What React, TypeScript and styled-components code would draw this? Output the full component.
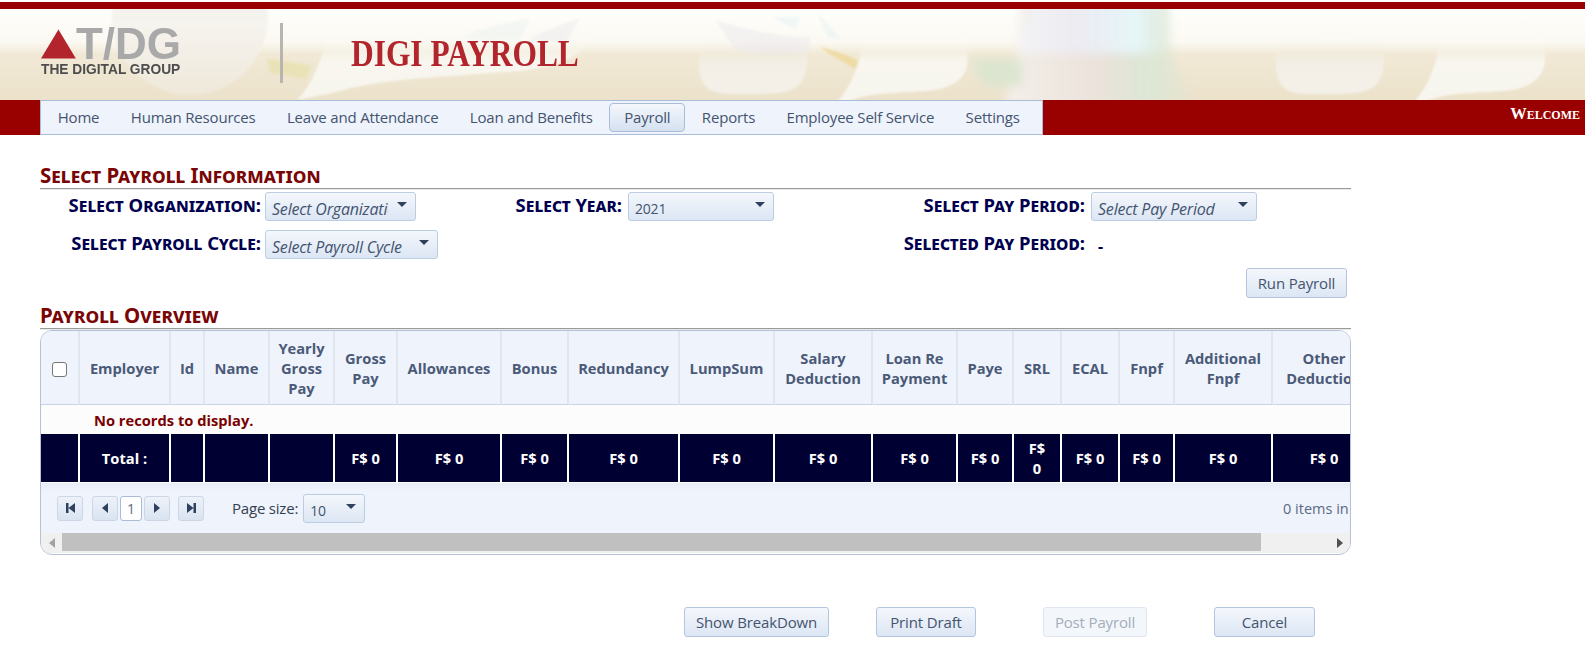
import React from 'react';
import styled, { createGlobalStyle } from 'styled-components';

const GlobalStyle = createGlobalStyle`
  html, body {
    margin: 0;
    padding: 0;
    background: #ffffff;
    overflow: hidden;
  }
  body {
    font-family: "Open Sans", "Noto Sans", sans-serif;
  }
`;

const Page = styled.div`
  width: 1585px;
  height: 657px;
  overflow: hidden;
  background: #fff;
`;

const TopStripe = styled.div`
  height: 7px;
  margin-top: 2px;
  background: #990000;
`;

const Banner = styled.header`
  position: relative;
  height: 91px;
  box-sizing: border-box;
  display: flex;
  align-items: center;
  padding: 0 0 4px 41px;
  overflow: hidden;
  background: linear-gradient(180deg, #fefefc 0%, #fbf9f2 36%, #f1e9d6 50%, #ece2cb 100%);
`;

const BannerArt = styled.svg`
  position: absolute;
  inset: 0;
  width: 100%;
  height: 100%;
`;

const Logo = styled.div`
  position: relative;
  width: 140px;
  display: flex;
  flex-direction: column;
`;

const LogoMark = styled.div`
  display: flex;
  align-items: center;
  height: 30px;
`;

const LogoLetters = styled.span`
  font-family: "Liberation Sans", Arial, sans-serif;
  font-weight: 700;
  font-size: 44px;
  line-height: 30px;
  color: #a9a9a9;
`;

const LogoName = styled.span`
  margin-top: 4px;
  font-family: "Liberation Sans", Arial, sans-serif;
  font-weight: 700;
  font-size: 13.75px;
  line-height: 14px;
  color: #4d4d4d;
  white-space: nowrap;
`;

const BannerDivider = styled.div`
  position: relative;
  width: 3px;
  height: 60px;
  margin-left: 99px;
  background: #b7b5ae;
`;

const ProductName = styled.div`
  position: relative;
  margin: 1px 0 0 68px;
  font-family: "Liberation Serif", serif;
  font-weight: 700;
  font-size: 38.5px;
  line-height: 38px;
  color: #b3252c;
  white-space: nowrap;
  transform: scaleX(0.816);
  transform-origin: left center;
`;

const NavBar = styled.nav`
  height: 35px;
  display: flex;
  justify-content: space-between;
  background: #990000;
  box-sizing: border-box;
`;

const NavMenu = styled.ul`
  list-style: none;
  margin: 0 0 0 40px;
  padding: 0 2px;
  width: 1003px;
  box-sizing: border-box;
  display: flex;
  align-items: center;
  background: #eff3fc;
  border: 1px solid #a9bdd8;
`;

const NavItem = styled.li<{ $active?: boolean }>`
  height: 27px;
  line-height: 26px;
  padding: 0 13.7px;
  margin-right: 2px;
  font-size: 15px;
  letter-spacing: -0.18px;
  color: #44546f;
  white-space: nowrap;
  border-radius: 4px;
  border: 1px solid ${p => (p.$active ? '#a9bdd8' : 'transparent')};
  background: ${p => (p.$active ? 'linear-gradient(180deg, #f4f7fc 0%, #d5e1f1 100%)' : 'none')};
`;

const Welcome = styled.div`
  font-family: "Liberation Serif", serif;
  font-variant: small-caps;
  font-weight: 700;
  font-size: 16.5px;
  line-height: 27px;
  color: #ffffff;
  padding-right: 5px;
`;

const Content = styled.main`
  width: 1311px;
  margin-left: 40px;
`;

const SectionTitle = styled.h2<{ $top: number }>`
  margin: ${p => p.$top}px 0 0;
  font-family: "Noto Sans", sans-serif;
  font-size: 20.5px;
  line-height: 26px;
  font-weight: 700;
  font-variant: small-caps;
  color: #7a0505;
  border-bottom: 1px solid #9a9a9a;
  box-shadow: 0 1px 0 #e9e9e9;
`;

const FormGrid = styled.div`
  display: grid;
  grid-template-columns: 225px 240px 123px 261px 202px 1fr;
  grid-auto-rows: 38px;
  margin-top: 3px;
  align-items: start;
`;

const FieldLabel = styled.label<{ $pad?: number }>`
  display: block;
  height: 29px;
  line-height: 26px;
  text-align: right;
  padding-right: ${p => p.$pad ?? 4}px;
  font-family: "Noto Sans", sans-serif;
  font-size: 18.5px;
  font-weight: 700;
  font-variant: small-caps;
  color: #00004f;
  white-space: nowrap;
`;

const Dropdown = styled.div<{ $width: number; $placeholder?: boolean }>`
  position: relative;
  width: ${p => p.$width}px;
  height: 29px;
  box-sizing: border-box;
  padding: 4px 27px 0 6px;
  font-size: ${p => (p.$placeholder ? 16 : 14)}px;
  line-height: 24px;
  letter-spacing: -0.2px;
  font-style: ${p => (p.$placeholder ? 'italic' : 'normal')};
  color: #44546f;
  background: linear-gradient(180deg, #f4f7fc 0%, #dce6f4 100%);
  border: 1px solid #bccde2;
  border-radius: 3px;

  &::after {
    content: '';
    position: absolute;
    right: 8px;
    top: 9px;
    border-left: 5.5px solid transparent;
    border-right: 5.5px solid transparent;
    border-top: 5.5px solid #2f415c;
  }
`;

const DropdownText = styled.span`
  display: block;
  overflow: hidden;
  white-space: nowrap;
`;

const SelectedValue = styled.span`
  font-size: 16px;
  font-weight: 700;
  line-height: 33px;
  padding-left: 7px;
  color: #00004f;
`;

const Button = styled.button<{ $width: number; $gap?: number }>`
  width: ${p => p.$width}px;
  height: 30px;
  margin-left: ${p => p.$gap ?? 0}px;
  padding: 0;
  font-family: inherit;
  font-size: 15px;
  letter-spacing: -0.15px;
  color: #44546f;
  background: linear-gradient(180deg, #f4f7fc 0%, #dce6f4 100%);
  border: 1px solid #b3c6de;
  border-radius: 3px;

  &:disabled {
    color: #a5adba;
    background: #f3f6fb;
    border-color: #dfe6f0;
  }
`;

const RunRow = styled.div`
  display: flex;
  justify-content: flex-end;
  padding-right: 4px;
`;

const GridPanel = styled.section`
  margin-top: 1px;
  height: 225px;
  border: 1px solid #b5c2d6;
  border-radius: 12px;
  overflow: hidden;
  background: #fff;
  box-sizing: border-box;
`;

const Table = styled.table`
  table-layout: fixed;
  border-collapse: separate;
  border-spacing: 0;
  width: 1336px;
`;

const HeadCell = styled.th`
  height: 74px;
  padding: 0 4px;
  box-sizing: border-box;
  background: #eff3fb;
  border-right: 2px solid #e0e6f0;
  border-bottom: 1px solid #c9d5e6;
  font-size: 14.7px;
  line-height: 20px;
  font-weight: 700;
  color: #4a5a78;
  text-align: center;
`;

const Check = styled.span`
  display: inline-block;
  width: 15px;
  height: 15px;
  vertical-align: middle;
  box-sizing: border-box;
  background: #fff;
  border: 1px solid #767676;
  border-radius: 3px;
`;

const EmptyCell = styled.td`
  height: 29px;
  padding: 0 0 0 53px;
  background: #fcfcfc;
  font-size: 14.7px;
  font-weight: 700;
  color: #7a0000;
`;

const TotalCell = styled.td<{ $narrow?: boolean }>`
  height: 49px;
  padding: 0 ${p => (p.$narrow ? 10 : 4)}px;
  box-sizing: border-box;
  background: #000033;
  border-right: 2px solid #ffffff;
  border-bottom: 1px solid #ffffff;
  color: #ffffff;
  font-size: 14.7px;
  line-height: 20px;
  font-weight: 700;
  text-align: center;
`;

const Pager = styled.div`
  height: 50px;
  display: flex;
  align-items: center;
  justify-content: space-between;
  padding-left: 16px;
  background: linear-gradient(180deg, #e6ecf5 0px, #eff3fb 7px);
  overflow: hidden;
`;

const PagerControls = styled.div`
  display: flex;
  align-items: center;
`;

const PagerButton = styled.span<{ $gap?: number }>`
  display: flex;
  align-items: center;
  justify-content: center;
  width: 26px;
  height: 25px;
  margin-left: ${p => p.$gap ?? 0}px;
  box-sizing: border-box;
  background: linear-gradient(180deg, #eef2f9 0%, #d9e3f1 100%);
  border: 1px solid #ccd6e4;
  border-radius: 3px;
`;

const PageNumber = styled.span`
  display: block;
  width: 22px;
  height: 25px;
  margin: 0 2px;
  box-sizing: border-box;
  text-align: center;
  line-height: 23px;
  font-size: 14px;
  color: #5a6a84;
  background: #fff;
  border: 1px solid #a9bdd8;
  border-radius: 3px;
`;

const PageSize = styled.span`
  margin: 0 5px 0 28px;
  font-size: 15px;
  letter-spacing: -0.2px;
  color: #333f52;
`;

const ItemsInfo = styled.span`
  width: 67px;
  overflow: hidden;
  white-space: nowrap;
  font-size: 14.5px;
  color: #5a6a84;
  flex: none;
`;

const ScrollBar = styled.div`
  height: 20px;
  display: flex;
  align-items: stretch;
  background: #f0f0f0;
`;

const ScrollArrow = styled.span`
  width: 21px;
  flex: none;
  display: flex;
  align-items: center;
  justify-content: center;
`;

const ScrollThumb = styled.span`
  width: 1199px;
  height: 18px;
  background: #c0c0c0;
`;

const ScrollTrack = styled.span`
  flex: 1;
`;

const Actions = styled.div`
  display: flex;
  padding-left: 644px;
  margin-top: 52px;
`;

const Triangle: React.FC<{ dir: 'left' | 'right'; color?: string }> = ({ dir, color = '#2f415c' }) => (
  <svg width="6" height="10" viewBox="0 0 6 10">
    <path d={dir === 'left' ? 'M6 0v10L0 5z' : 'M0 0v10l6-5z'} fill={color} />
  </svg>
);

const EndIcon: React.FC<{ dir: 'first' | 'last' }> = ({ dir }) => (
  <svg width="9" height="10" viewBox="0 0 9 10">
    <path d={dir === 'first' ? 'M0 0h2.5v10H0zM9 0v10L2.5 5z' : 'M6.5 0H9v10H6.5zM0 0v10l6.5-5z'} fill="#2f415c" />
  </svg>
);

const columns = [
  { label: 'Employer', width: 91 },
  { label: 'Id', width: 34 },
  { label: 'Name', width: 65 },
  { label: 'Yearly Gross Pay', width: 65 },
  { label: 'Gross Pay', width: 63, total: 'F$ 0' },
  { label: 'Allowances', width: 104, total: 'F$ 0' },
  { label: 'Bonus', width: 67, total: 'F$ 0' },
  { label: 'Redundancy', width: 111, total: 'F$ 0' },
  { label: 'LumpSum', width: 95, total: 'F$ 0' },
  { label: 'Salary Deduction', width: 98, total: 'F$ 0' },
  { label: 'Loan Re Payment', width: 85, total: 'F$ 0' },
  { label: 'Paye', width: 56, total: 'F$ 0' },
  { label: 'SRL', width: 48, total: 'F$ 0', narrow: true },
  { label: 'ECAL', width: 58, total: 'F$ 0' },
  { label: 'Fnpf', width: 55, total: 'F$ 0' },
  { label: 'Additional Fnpf', width: 98, total: 'F$ 0' },
  { label: 'Other Deduction', width: 104, total: 'F$ 0' },
];

const BOWL = 'M0 28C0 62 20 59 54 59S108 58 108 24C108 14 106 6 106 0L2 2C1 10 0 18 0 28Z';
const BLOB = 'M0 66C14 50 22 28 24 8C26 2 30 0 40 0H120C128 0 130 10 130 24C130 40 118 54 88 56C60 58 30 58 12 66Z';

const BannerBackdrop = () => (
  <BannerArt viewBox="0 0 1585 91" aria-hidden="true">
    <defs>
      <linearGradient id="fade" x1="0" x2="0" y1="0" y2="1">
        <stop offset="0" stopColor="#fafaf6" stopOpacity="0" />
        <stop offset="0.22" stopColor="#fafaf6" stopOpacity="0.2" />
        <stop offset="0.42" stopColor="#f8f7f0" stopOpacity="0.95" />
        <stop offset="1" stopColor="#f7f5ee" />
      </linearGradient>
      <linearGradient id="bowl" x1="0" x2="0" y1="0" y2="1">
        <stop offset="0" stopColor="#f4f1ea" stopOpacity="0" />
        <stop offset="0.3" stopColor="#f4f1ea" stopOpacity="0.2" />
        <stop offset="0.5" stopColor="#f3f0e8" stopOpacity="0.9" />
        <stop offset="1" stopColor="#f3f0e8" />
      </linearGradient>
      <linearGradient id="lilac" x1="0" x2="1" y1="0" y2="0">
        <stop offset="0" stopColor="#f4f3f4" />
        <stop offset="0.4" stopColor="#ecebf2" />
        <stop offset="0.78" stopColor="#e6f6f8" />
        <stop offset="1" stopColor="#e6f6f8" stopOpacity="0" />
      </linearGradient>
      <linearGradient id="rose" x1="0" x2="1" y1="0" y2="0">
        <stop offset="0" stopColor="#f4f0e9" />
        <stop offset="0.45" stopColor="#ebe2dc" />
        <stop offset="0.72" stopColor="#dce6d4" />
        <stop offset="1" stopColor="#dce6d4" stopOpacity="0" />
      </linearGradient>
      <linearGradient id="moon" x1="0" x2="0" y1="0" y2="1">
        <stop offset="0" stopColor="#ecebf3" />
        <stop offset="0.55" stopColor="#f6f4ee" />
        <stop offset="1" stopColor="#efe7da" />
      </linearGradient>
      <filter id="soft">
        <feGaussianBlur stdDeviation="0.8" />
      </filter>
      <filter id="mist">
        <feGaussianBlur stdDeviation="5" />
      </filter>
    </defs>

    <g filter="url(#soft)">
      <circle cx="190" cy="8" r="78" fill="url(#moon)" />
      <path d="M297 91C312 76 322 50 325 33C380 25 500 22 590 24C592 40 570 56 520 62C440 68 380 70 340 82C325 86 310 88 297 91Z" fill="url(#fade)" />
      <path d={BOWL} transform="translate(699 26)" fill="url(#bowl)" />
      <path d={BOWL} transform="translate(1276 26)" fill="url(#bowl)" />
      <path d={BLOB} transform="translate(838 26)" fill="url(#fade)" />
      <path d={BLOB} transform="translate(1415 26)" fill="url(#fade)" />
    </g>

    <g filter="url(#mist)">
      <path d="M1000 120C1010 70 1015 50 1020 34V-20H1170V38C1175 60 1190 90 1207 120Z" fill="url(#rose)" />
      <path d="M1015 44C1025 14 1030 0 1030 -20H1170V44Z" fill="url(#lilac)" />
      <path d="M970 50H1022V77H985Z" fill="#dbe5cf" />
    </g>

    <g filter="url(#soft)" opacity="0.5">
      <path d="M716 12C740 18 780 30 810 28V44C780 46 750 48 735 40Z" fill="#ebe8ee" />
      <path d="M773 8L800 8L795 20ZM817 4L841 30L828 28Z" fill="#e2f2f2" />
      <path d="M463 28C480 20 510 12 530 10L520 30C500 30 480 32 463 28Z" fill="#ecf2f0" />
      <path d="M530 30C550 20 570 12 580 10L565 34Z" fill="#eceaee" />
    </g>
    <path d="M267 50L311 56L306 70L270 64Z" fill="#e8e2b0" opacity="0.8" filter="url(#soft)" />
    <path d="M820 38C835 42 848 46 858 52L855 60C842 52 830 46 820 38Z" fill="#eedca4" filter="url(#soft)" />
  </BannerArt>
);

const App: React.FC = () => {
  return (
    <Page>
      <GlobalStyle />
      <TopStripe />
      <Banner>
        <BannerBackdrop />
        <Logo>
          <LogoMark>
            <svg width="36" height="30" viewBox="0 0 36 30" aria-hidden="true">
              <path d="M18 0l18 30H0z" fill="#b3252c" />
            </svg>
            <LogoLetters>T/DG</LogoLetters>
          </LogoMark>
          <LogoName>THE DIGITAL GROUP</LogoName>
        </Logo>
        <BannerDivider />
        <ProductName>DIGI PAYROLL</ProductName>
      </Banner>

      <NavBar>
        <NavMenu>
          <NavItem>Home</NavItem>
          <NavItem>Human Resources</NavItem>
          <NavItem>Leave and Attendance</NavItem>
          <NavItem>Loan and Benefits</NavItem>
          <NavItem $active>Payroll</NavItem>
          <NavItem>Reports</NavItem>
          <NavItem>Employee Self Service</NavItem>
          <NavItem>Settings</NavItem>
        </NavMenu>
        <Welcome>Welcome</Welcome>
      </NavBar>

      <Content>
        <SectionTitle $top={27}>Select Payroll Information</SectionTitle>
        <FormGrid>
          <FieldLabel>Select Organization:</FieldLabel>
          <Dropdown $width={151} $placeholder><DropdownText>Select Organization</DropdownText></Dropdown>
          <FieldLabel $pad={6}>Select Year:</FieldLabel>
          <Dropdown $width={146}><DropdownText>2021</DropdownText></Dropdown>
          <FieldLabel $pad={6}>Select Pay Period:</FieldLabel>
          <Dropdown $width={166} $placeholder><DropdownText>Select Pay Period</DropdownText></Dropdown>

          <FieldLabel>Select Payroll Cycle:</FieldLabel>
          <Dropdown $width={173} $placeholder><DropdownText>Select Payroll Cycle</DropdownText></Dropdown>
          <span />
          <span />
          <FieldLabel $pad={6}>Selected Pay Period:</FieldLabel>
          <SelectedValue>-</SelectedValue>
        </FormGrid>
        <RunRow>
          <Button $width={101}>Run Payroll</Button>
        </RunRow>

        <SectionTitle $top={4}>Payroll Overview</SectionTitle>
        <GridPanel>
          <Table>
            <colgroup>
              <col style={{ width: 39 }} />
              {columns.map(c => (
                <col key={c.label} style={{ width: c.width }} />
              ))}
            </colgroup>
            <thead>
              <tr>
                <HeadCell><Check /></HeadCell>
                {columns.map(c => (
                  <HeadCell key={c.label}>{c.label}</HeadCell>
                ))}
              </tr>
            </thead>
            <tbody>
              <tr>
                <EmptyCell colSpan={18}>No records to display.</EmptyCell>
              </tr>
              <tr>
                <TotalCell />
                <TotalCell>Total :</TotalCell>
                <TotalCell />
                <TotalCell />
                <TotalCell />
                {columns.slice(4).map(c => (
                  <TotalCell key={c.label} $narrow={c.narrow}>{c.total}</TotalCell>
                ))}
              </tr>
            </tbody>
          </Table>
          <Pager>
            <PagerControls>
              <PagerButton><EndIcon dir="first" /></PagerButton>
              <PagerButton $gap={9}><Triangle dir="left" /></PagerButton>
              <PageNumber>1</PageNumber>
              <PagerButton><Triangle dir="right" /></PagerButton>
              <PagerButton $gap={8}><EndIcon dir="last" /></PagerButton>
              <PageSize>Page size:</PageSize>
              <Dropdown $width={62}><DropdownText>10</DropdownText></Dropdown>
            </PagerControls>
            <ItemsInfo>0 items in 1 pages</ItemsInfo>
          </Pager>
          <ScrollBar>
            <ScrollArrow><Triangle dir="left" color="#a3a3a3" /></ScrollArrow>
            <ScrollThumb />
            <ScrollTrack />
            <ScrollArrow><Triangle dir="right" color="#505050" /></ScrollArrow>
          </ScrollBar>
        </GridPanel>

        <Actions>
          <Button $width={145}>Show BreakDown</Button>
          <Button $width={100} $gap={47}>Print Draft</Button>
          <Button $width={104} $gap={67} disabled>Post Payroll</Button>
          <Button $width={101} $gap={67}>Cancel</Button>
        </Actions>
      </Content>
    </Page>
  );
};

export default App;
